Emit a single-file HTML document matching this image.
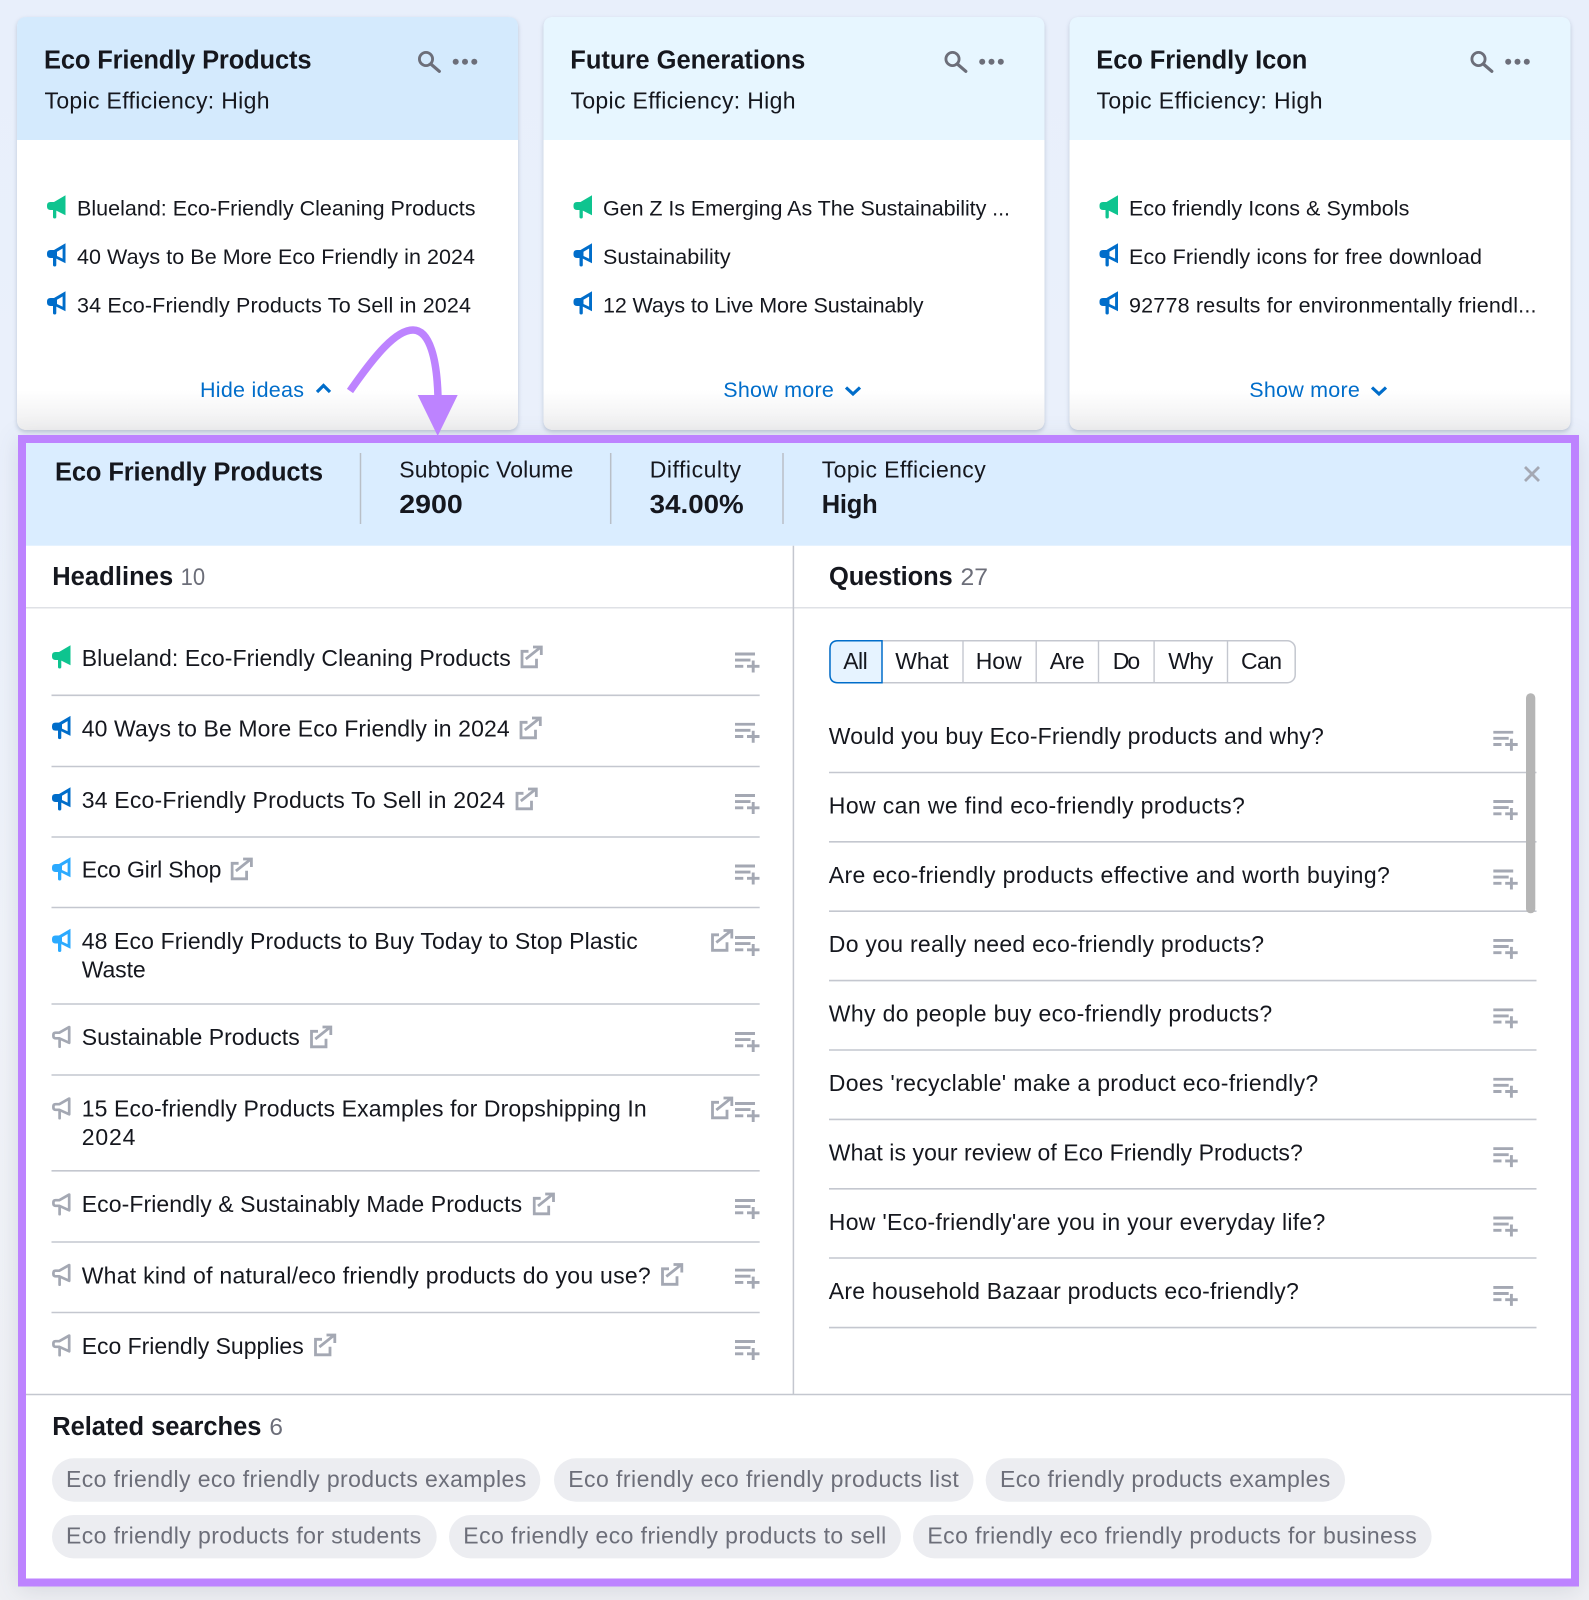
<!DOCTYPE html>
<html lang="en"><head><meta charset="utf-8"><title>Eco Friendly Products</title>
<style>
html,body{margin:0;padding:0;background:#eef1f7}
svg{display:block;font-family:"Liberation Sans",Arial,sans-serif}
.t{font-size:21.5px;fill:#15171e}
.d{font-size:23px;fill:#15171e}
.b{font-size:25.5px;font-weight:700;fill:#15171e}
.n{font-size:26px;font-weight:700;fill:#15171e}
.c{font-size:24.5px;fill:#6c6e79}
.l{font-size:21.5px;fill:#006dca}
.g{font-size:23px;fill:#6c6e79}
.sep{stroke:#c4c7cf;stroke-width:1.6}
.cs{filter:drop-shadow(0 2px 2px rgba(90,110,140,.32))}
</style></head><body>
<svg xmlns="http://www.w3.org/2000/svg" width="1589" height="1600" viewBox="0 0 1589 1600">
<defs>
<linearGradient id="bg" x1="0" y1="0" x2="0" y2="1"><stop offset="0" stop-color="#e8effb"/><stop offset=".27" stop-color="#eaf0fb"/><stop offset=".6" stop-color="#f0f3f9"/><stop offset="1" stop-color="#eff0f4"/></linearGradient>
<linearGradient id="fade" x1="0" y1="0" x2="0" y2="1"><stop offset="0" stop-color="#fff"/><stop offset="1" stop-color="#eeeeef"/></linearGradient>
<symbol id="mf" width="19" height="24" viewBox="0 0 19 24"><path fill="currentColor" d="M18.5 .3 7 7H3.5Q0 7 0 10.5V11.5Q0 15 3.5 15H6V22Q6 23.5 7.7 23.5 9.3 23.5 9.3 22V15.6L18.5 20.3Z"/></symbol>
<symbol id="mh" width="19" height="24" viewBox="0 0 19 24"><path fill="currentColor" fill-rule="evenodd" d="M18.5 .3 7 7H3.5Q0 7 0 10.5V11.5Q0 15 3.5 15H6V22Q6 23.5 7.7 23.5 9.3 23.5 9.3 22V15.6L18.5 20.3ZM15.6 5.5 10 8.8V13L15.6 15.6Z"/></symbol>
<symbol id="mo" width="19" height="24" viewBox="0 0 19 24"><path fill="none" stroke="currentColor" stroke-width="2.7" stroke-linejoin="round" stroke-linecap="round" d="M17.2 2.6 7.3 8.2H3.6Q1.4 8.2 1.4 10.5V11.5Q1.4 13.8 3.6 13.8H7.3L17.2 18.3ZM7.6 14V22.2"/></symbol>
<symbol id="ext" width="23" height="23" viewBox="0 0 23 23"><path fill="none" stroke="#a4a8b3" stroke-width="2.8" d="M8 5.8H1.5V21.3H16V13.3M5.3 13.5 20 1.8M12.5 1.5H20.8V9.5"/></symbol>
<symbol id="add" width="26" height="21" viewBox="0 0 26 21"><path fill="none" stroke="#a4a8b3" stroke-width="2.9" d="M0 1.5H20M0 7.6H15.5M0 13.8H8.3M12 13.8H24.5M18.2 8V20"/></symbol>
<symbol id="srch" width="34" height="28" viewBox="0 0 34 28"><circle cx="12" cy="11" r="6.6" fill="none" stroke="#6c6e79" stroke-width="2.8"/><path d="M16.8 16 25.3 23.3" stroke="#6c6e79" stroke-width="3.2" stroke-linecap="round"/></symbol>
</defs>
<rect width="1589" height="1600" fill="url(#bg)"/>

<!-- Cards -->
<g class="cs">
<rect x="17" y="17" width="501" height="413" rx="10" fill="#fff"/>
<path d="M17 390H518V420Q518 430 508 430H27Q17 430 17 420Z" fill="url(#fade)"/>
<path d="M17 140V27Q17 17 27 17H508Q518 17 518 27V140Z" fill="#d4eafd"/>
</g>
<text class="b" x="44" y="68.5" textLength="267.5">Eco Friendly Products</text>
<text class="d" x="44.5" y="108.3" textLength="225">Topic Efficiency: High</text>
<use href="#srch" x="414" y="48"/>
<circle cx="455.7" cy="61.7" r="3" fill="#6c6e79"/><circle cx="465" cy="61.7" r="3" fill="#6c6e79"/><circle cx="474.3" cy="61.7" r="3" fill="#6c6e79"/>
<use href="#mf" x="47" y="195" color="#0ec48f"/><text class="t" x="77" y="215.6" textLength="398.5">Blueland: Eco-Friendly Cleaning Products</text>
<use href="#mh" x="47" y="243" color="#006dca"/><text class="t" x="77" y="264" textLength="398">40 Ways to Be More Eco Friendly in 2024</text>
<use href="#mh" x="47" y="291" color="#006dca"/><text class="t" x="77" y="312.7" textLength="394">34 Eco-Friendly Products To Sell in 2024</text>
<text class="l" x="200" y="397" textLength="104">Hide ideas</text>
<path d="M317 392 323.5 385.5 330 392" fill="none" stroke="#006dca" stroke-width="3.2"/>

<g transform="translate(526.5,0)">
<g class="cs">
<rect x="17" y="17" width="501" height="413" rx="10" fill="#fff"/>
<path d="M17 390H518V420Q518 430 508 430H27Q17 430 17 420Z" fill="url(#fade)"/>
<path d="M17 140V27Q17 17 27 17H508Q518 17 518 27V140Z" fill="#e7f6ff"/>
</g>
<text class="b" x="43.8" y="68.5" textLength="235">Future Generations</text>
<text class="d" x="44" y="108.3" textLength="225">Topic Efficiency: High</text>
<use href="#srch" x="414" y="48"/>
<circle cx="455.7" cy="61.7" r="3" fill="#6c6e79"/><circle cx="465" cy="61.7" r="3" fill="#6c6e79"/><circle cx="474.3" cy="61.7" r="3" fill="#6c6e79"/>
<use href="#mf" x="47" y="195" color="#0ec48f"/><text class="t" x="76.5" y="215.6" textLength="407">Gen Z Is Emerging As The Sustainability ...</text>
<use href="#mh" x="47" y="243" color="#006dca"/><text class="t" x="76.5" y="264" textLength="127.6">Sustainability</text>
<use href="#mh" x="47" y="291" color="#006dca"/><text class="t" x="76.5" y="312.7" textLength="320.5">12 Ways to Live More Sustainably</text>
<text class="l" x="196.8" y="397" textLength="110.5">Show more</text>
<path d="M319.5 387.5 326.5 394 333.5 387.5" fill="none" stroke="#006dca" stroke-width="3.2"/>
</g>

<g transform="translate(1052.5,0)">
<g class="cs">
<rect x="17" y="17" width="501" height="413" rx="10" fill="#fff"/>
<path d="M17 390H518V420Q518 430 508 430H27Q17 430 17 420Z" fill="url(#fade)"/>
<path d="M17 140V27Q17 17 27 17H508Q518 17 518 27V140Z" fill="#e7f6ff"/>
</g>
<text class="b" x="43.8" y="68.5" textLength="211">Eco Friendly Icon</text>
<text class="d" x="44" y="108.3" textLength="226">Topic Efficiency: High</text>
<use href="#srch" x="414" y="48"/>
<circle cx="455.7" cy="61.7" r="3" fill="#6c6e79"/><circle cx="465" cy="61.7" r="3" fill="#6c6e79"/><circle cx="474.3" cy="61.7" r="3" fill="#6c6e79"/>
<use href="#mf" x="47" y="195" color="#0ec48f"/><text class="t" x="76.5" y="215.6" textLength="280.4">Eco friendly Icons &amp; Symbols</text>
<use href="#mh" x="47" y="243" color="#006dca"/><text class="t" x="76.5" y="264" textLength="353">Eco Friendly icons for free download</text>
<use href="#mh" x="47" y="291" color="#006dca"/><text class="t" x="76.5" y="312.7" textLength="407.5">92778 results for environmentally friendl...</text>
<text class="l" x="196.8" y="397" textLength="110.5">Show more</text>
<path d="M319.5 387.5 326.5 394 333.5 387.5" fill="none" stroke="#006dca" stroke-width="3.2"/>
</g>

<!-- Detail panel -->
<g style="filter:drop-shadow(0 4px 12px rgba(40,50,70,.12))">
<rect x="22" y="439" width="1553" height="1143.5" fill="#fff" stroke="#bd83ff" stroke-width="8"/>
</g>
<rect x="26" y="443" width="1545" height="102.7" fill="#daedff"/>
<text class="b" x="55" y="480.7" textLength="268">Eco Friendly Products</text>
<path d="M360.5 453V524M610.7 453V524M783 453V524" stroke="#b9bfc7" stroke-width="1.5"/>
<text class="d" x="399.3" y="477.5" textLength="174">Subtopic Volume</text>
<text class="n" x="399.3" y="513" textLength="63.5" lengthAdjust="spacingAndGlyphs">2900</text>
<text class="d" x="649.7" y="477.5" textLength="91.3">Difficulty</text>
<text class="n" x="649.7" y="513" textLength="94" lengthAdjust="spacingAndGlyphs">34.00%</text>
<text class="d" x="821.7" y="477.5" textLength="164">Topic Efficiency</text>
<text class="b" x="821.7" y="513" textLength="56">High</text>
<path d="M1525 467 1539 481M1539 467 1525 481" stroke="#a4a8b3" stroke-width="2.8"/>

<path d="M26 607.7H1571" stroke="#dfe1e6" stroke-width="1.5"/>
<path d="M793.4 545.7V1394" stroke="#c4c7cf" stroke-width="1.5"/>
<path d="M26 1394.5H1571" stroke="#c4c7cf" stroke-width="1.6"/>
<text class="b" x="52.2" y="585" textLength="121">Headlines</text><text class="c" x="180.6" y="585" textLength="24.5" lengthAdjust="spacingAndGlyphs">10</text>
<text class="b" x="829" y="585" textLength="123.7">Questions</text><text class="c" x="960.5" y="585" textLength="27.5" lengthAdjust="spacingAndGlyphs">27</text>

<!-- Headline rows -->
<use href="#mf" x="52" y="645" color="#0ec48f"/><text class="d" x="81.7" y="666" textLength="429">Blueland: Eco-Friendly Cleaning Products</text><use href="#ext" x="520.5" y="645.5"/><use href="#add" x="735" y="652.5"/>
<path class="sep" d="M51.5 695.3H759.7"/>
<use href="#mh" x="52" y="715.6" color="#006dca"/><text class="d" x="81.7" y="736.6" textLength="428">40 Ways to Be More Eco Friendly in 2024</text><use href="#ext" x="519.5" y="716.5"/><use href="#add" x="735" y="722.7"/>
<path class="sep" d="M51.5 766.5H759.7"/>
<use href="#mh" x="52" y="787" color="#006dca"/><text class="d" x="81.7" y="808" textLength="423.3">34 Eco-Friendly Products To Sell in 2024</text><use href="#ext" x="515.5" y="787.5"/><use href="#add" x="735" y="794"/>
<path class="sep" d="M51.5 837H759.7"/>
<use href="#mh" x="52" y="857" color="#2baaff"/><text class="d" x="81.7" y="877.6" textLength="139.7">Eco Girl Shop</text><use href="#ext" x="230.6" y="857.5"/><use href="#add" x="735" y="864.5"/>
<path class="sep" d="M51.5 907.5H759.7"/>
<use href="#mh" x="52" y="928.5" color="#2baaff"/><text class="d" x="81.7" y="949" textLength="556">48 Eco Friendly Products to Buy Today to Stop Plastic</text><text class="d" x="81.7" y="977.4" textLength="64">Waste</text><use href="#ext" x="711" y="929"/><use href="#add" x="735" y="936"/>
<path class="sep" d="M51.5 1004H759.7"/>
<use href="#mo" x="52" y="1024.5" color="#a4a8b3"/><text class="d" x="81.7" y="1044.9" textLength="218">Sustainable Products</text><use href="#ext" x="310" y="1025.5"/><use href="#add" x="735" y="1032"/>
<path class="sep" d="M51.5 1075H759.7"/>
<use href="#mo" x="52" y="1096" color="#a4a8b3"/><text class="d" x="81.7" y="1116.3" textLength="565">15 Eco-friendly Products Examples for Dropshipping In</text><text class="d" x="81.7" y="1144.8" textLength="53.7">2024</text><use href="#ext" x="711" y="1096.5"/><use href="#add" x="735" y="1102"/>
<path class="sep" d="M51.5 1170.8H759.7"/>
<use href="#mo" x="52" y="1192" color="#a4a8b3"/><text class="d" x="81.7" y="1212.2" textLength="440.4">Eco-Friendly &amp; Sustainably Made Products</text><use href="#ext" x="532.7" y="1192.5"/><use href="#add" x="735" y="1199"/>
<path class="sep" d="M51.5 1242H759.7"/>
<use href="#mo" x="52" y="1262.5" color="#a4a8b3"/><text class="d" x="81.7" y="1283.3" textLength="569">What kind of natural/eco friendly products do you use?</text><use href="#ext" x="661" y="1263"/><use href="#add" x="735" y="1268.6"/>
<path class="sep" d="M51.5 1312.5H759.7"/>
<use href="#mo" x="52" y="1333" color="#a4a8b3"/><text class="d" x="81.7" y="1354" textLength="222">Eco Friendly Supplies</text><use href="#ext" x="314" y="1333.5"/><use href="#add" x="735" y="1340"/>

<!-- Segmented filter -->
<rect x="830" y="640.7" width="465.2" height="42" rx="8" fill="#fff" stroke="#c4c7cf" stroke-width="1.5"/>
<path d="M963 641V682.7M1036.2 641V682.7M1098.5 641V682.7M1154.1 641V682.7M1227.5 641V682.7" stroke="#c4c7cf" stroke-width="1.4"/>
<path d="M882 640.7H838Q830 640.7 830 648.7V674.7Q830 682.7 838 682.7H882Z" fill="#e6f3ff" stroke="#006dca" stroke-width="1.5"/>
<text class="d" x="843.3" y="669" textLength="24.4">All</text>
<text class="d" x="895.3" y="669" textLength="53.4">What</text>
<text class="d" x="975.7" y="669" textLength="46">How</text>
<text class="d" x="1049.7" y="669" textLength="35">Are</text>
<text class="d" x="1112.7" y="669" textLength="27.5">Do</text>
<text class="d" x="1168.2" y="669" textLength="45">Why</text>
<text class="d" x="1241" y="669" textLength="41">Can</text>

<!-- Questions -->
<text class="d" x="828.8" y="744.2" textLength="495">Would you buy Eco-Friendly products and why?</text>
<text class="d" x="828.8" y="813.4" textLength="416">How can we find eco-friendly products?</text>
<text class="d" x="828.8" y="882.8" textLength="561">Are eco-friendly products effective and worth buying?</text>
<text class="d" x="828.8" y="952.2" textLength="435.3">Do you really need eco-friendly products?</text>
<text class="d" x="828.8" y="1021.6" textLength="443.4">Why do people buy eco-friendly products?</text>
<text class="d" x="828.8" y="1091" textLength="489.4">Does 'recyclable' make a product eco-friendly?</text>
<text class="d" x="828.8" y="1160.4" textLength="474">What is your review of Eco Friendly Products?</text>
<text class="d" x="828.8" y="1229.8" textLength="496.5">How 'Eco-friendly'are you in your everyday life?</text>
<text class="d" x="828.8" y="1299.2" textLength="470">Are household Bazaar products eco-friendly?</text>
<path class="sep" d="M829 772.5H1536.5M829 841.8H1536.5M829 911.2H1536.5M829 980.6H1536.5M829 1050H1536.5M829 1119.4H1536.5M829 1188.8H1536.5M829 1258H1536.5M829 1327.6H1536.5"/>
<use href="#add" x="1493.2" y="730.7"/><use href="#add" x="1493.2" y="800"/><use href="#add" x="1493.2" y="869.5"/><use href="#add" x="1493.2" y="938.9"/><use href="#add" x="1493.2" y="1008.3"/><use href="#add" x="1493.2" y="1077.7"/><use href="#add" x="1493.2" y="1147.1"/><use href="#add" x="1493.2" y="1216.5"/><use href="#add" x="1493.2" y="1285.9"/>
<rect x="1526" y="693.3" width="9.3" height="220" rx="4.6" fill="#b5b5b5"/>

<!-- Related -->
<text class="b" x="52.2" y="1435" textLength="209.2">Related searches</text><text class="c" x="269.4" y="1435" textLength="13.6" lengthAdjust="spacingAndGlyphs">6</text>
<rect x="52" y="1458.3" width="488.3" height="43.4" rx="21.7" fill="#ecedf1"/>
<rect x="554" y="1458.3" width="419.5" height="43.4" rx="21.7" fill="#ecedf1"/>
<rect x="985.7" y="1458.3" width="359.3" height="43.4" rx="21.7" fill="#ecedf1"/>
<rect x="52" y="1515" width="384.7" height="43.4" rx="21.7" fill="#ecedf1"/>
<rect x="449" y="1515" width="452" height="43.4" rx="21.7" fill="#ecedf1"/>
<rect x="913" y="1515" width="518.6" height="43.4" rx="21.7" fill="#ecedf1"/>
<text class="g" x="66" y="1487" textLength="460.2">Eco friendly eco friendly products examples</text>
<text class="g" x="568.2" y="1487" textLength="390.6">Eco friendly eco friendly products list</text>
<text class="g" x="1000" y="1487" textLength="330.3">Eco friendly products examples</text>
<text class="g" x="66" y="1543.6" textLength="355.1">Eco friendly products for students</text>
<text class="g" x="463.3" y="1543.6" textLength="423">Eco friendly eco friendly products to sell</text>
<text class="g" x="927.4" y="1543.6" textLength="489.4">Eco friendly eco friendly products for business</text>

<!-- Arrow -->
<path d="M350 391C375 355 396 330 413 330 430 330 437 360 438 397" fill="none" stroke="#bd83ff" stroke-width="7.5"/>
<path d="M417.7 395H457.7L437.7 436Z" fill="#bd83ff"/>
</svg>
</body></html>
